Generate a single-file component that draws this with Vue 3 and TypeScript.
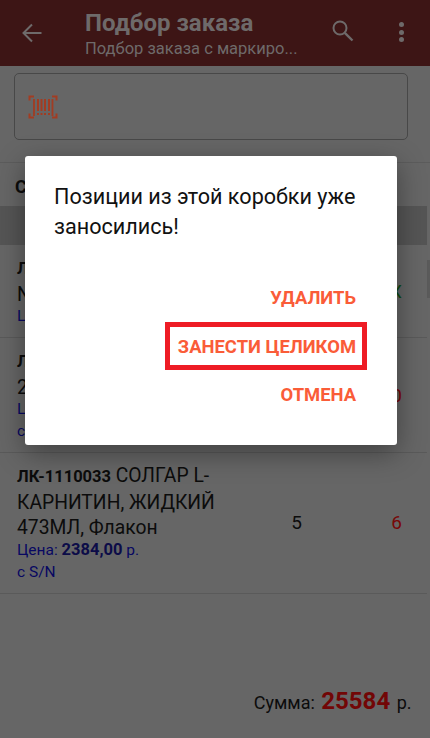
<template>
  <div class="screen">
    <header class="toolbar">
      <svg class="back" width="20" height="20" viewBox="0 0 20 20" fill="none" stroke="#6e6a6a" stroke-width="2"><path d="M19.500 10H2M10 1.500 1.500 10l8.500 8.500" /></svg>
      <div class="titles">
        <div class="title">Подбор заказа</div>
        <div class="subtitle">Подбор заказа с маркиро...</div>
      </div>
      <svg class="search" width="22" height="22" viewBox="0 0 22 22" fill="none" stroke="#6e6a6a"><circle cx="8" cy="8" r="6.500" stroke-width="2" /><path d="m12.800 12.800 7.700 7.700" stroke-width="2.400" /></svg>
      <div class="dots"><i></i><i></i><i></i></div>
    </header>

    <div class="scan">
      <svg width="30" height="24" viewBox="0 0 30 24" fill="none" stroke="#a23c22">
        <path d="M6 1.500H1.500V5.500M24 1.500h4.500v4M6 22.500H1.500v-4M24 22.500h4.500v-4" stroke-width="2" />
        <path d="M6 4v17M24.500 4v17" stroke-width="1.800" />
        <path d="M10 4v12M10 18v2M13.500 4v12M13.500 18v2M17 4v12M17 18v2M21 4v12M21 18v2" stroke-width="2" />
      </svg>
    </div>

    <div class="section">Состав</div>
    <div class="band"></div>

    <div v-for="row in rows" :key="row.code" class="row">
      <div class="info">
        <div class="name"><b>{{ row.code }}</b> {{ row.name }}</div>
        <div class="price">Цена: <b>{{ row.price }}</b> р.</div>
        <div v-if="row.serial" class="serial">с S/N</div>
      </div>
      <div class="qty">{{ row.qty }}</div>
      <div class="fact" :class="row.tone">{{ row.fact }}</div>
    </div>

    <div class="total">Сумма: <b>25584</b> р.</div>

    <div class="thumb"></div>

    <div class="dialog">
      <p class="message">Позиции из этой коробки уже заносились!</p>
      <div class="actions">
        <button>УДАЛИТЬ</button>
        <button class="marked">ЗАНЕСТИ ЦЕЛИКОМ</button>
        <button>ОТМЕНА</button>
      </div>
    </div>
  </div>
</template>

<script setup lang="ts">
interface Row {
  code: string
  name: string
  price: string
  serial: boolean
  qty: number
  fact: string
  tone: string
}

const rows: Row[] = [
  { code: 'ЛК-1110031', name: 'СОЛГАР NATURAL, Флакон', price: '2384,00', serial: false, qty: 5, fact: 'X', tone: 'green' },
  { code: 'ЛК-1110032', name: 'СОЛГАР 2500МЕ, Флакон', price: '2384,00', serial: true, qty: 5, fact: '0', tone: 'red' },
  { code: 'ЛК-1110033', name: 'СОЛГАР L-КАРНИТИН, ЖИДКИЙ 473МЛ, Флакон', price: '2384,00', serial: true, qty: 5, fact: '6', tone: 'red' },
]
</script>

<style>
html,
body {
  margin: 0;
  background: #666;
}
</style>

<style scoped>
.screen {
  position: relative;
  width: 430px;
  height: 738px;
  overflow: hidden;
  display: flex;
  flex-direction: column;
  background: #666;
  color: #0c0c0c;
  font-family: Roboto, sans-serif;
}

.toolbar {
  height: 66px;
  flex: none;
  display: flex;
  align-items: center;
  background: #3d1515;
  color: #6e6a6a;
}

.back {
  margin-left: 22px;
  flex: none;
}

.titles {
  margin-left: 43px;
  width: 248px;
  white-space: nowrap;
}

.title {
  font-size: 24px;
  font-weight: 700;
  line-height: 28px;
  margin-top: 3px;
}

.subtitle {
  font-size: 16.500px;
  line-height: 24px;
}

.search {
  margin-left: -1px;
  margin-top: -4px;
  flex: none;
}

.dots {
  margin-left: 45px;
  margin-top: -2px;
  display: flex;
  flex-direction: column;
  gap: 2.500px;
}

.dots i {
  width: 5px;
  height: 5px;
  border-radius: 50%;
  background: #6e6a6a;
}

.scan {
  height: 65px;
  margin: 7px 22px 0 14px;
  flex: none;
  display: flex;
  align-items: center;
  padding-left: 13px;
  border: 1px solid #484848;
  border-radius: 5px;
}

.section {
  margin-top: 22px;
  padding: 12px 15px 0;
  height: 31px;
  flex: none;
  border-top: 1px solid #5c5c5c;
  font-size: 18px;
  font-weight: 700;
  line-height: 24px;
  width: 412px;
}

.band {
  height: 39px;
  width: 427px;
  flex: none;
  background: #555;
}

.row {
  width: 427px;
  flex: none;
  box-sizing: border-box;
  display: flex;
  align-items: center;
  padding: 10px 0 10px 17px;
  border-bottom: 1px solid #5a5a5a;
}

.info {
  width: 225px;
  flex: none;
}

.name {
  font-size: 19.300px;
  line-height: 25.500px;
}

.name b {
  font-size: 16.500px;
}

.price,
.serial {
  color: #080862;
  font-size: 15.500px;
  line-height: 22px;
}

.price {
  margin-top: -2px;
}

.price b {
  color: #0c0c48;
  font-size: 16.500px;
}

.qty {
  width: 60px;
  text-align: right;
  font-size: 19px;
  padding-right: 15px;
  box-sizing: border-box;
  margin-left: 15px;
}

.fact {
  margin-left: auto;
  margin-right: 25px;
  font-size: 19px;
}

.red {
  color: #780808;
}

.green {
  color: #0c4a10;
}

.total {
  margin-top: auto;
  margin-bottom: 19px;
  padding-right: 18.500px;
  text-align: right;
  font-size: 18px;
  line-height: 32px;
}

.total b {
  color: #720606;
  font-size: 24px;
  margin: 0 2px;
}

.thumb {
  position: absolute;
  right: 0;
  top: 260px;
  width: 3px;
  height: 38px;
  background: #5a5a5a;
}

.dialog {
  position: absolute;
  left: 25px;
  top: 156px;
  width: 372px;
  height: 289px;
  box-sizing: border-box;
  padding: 26px 29px 0;
  background: #fff;
  border-radius: 3px;
  box-shadow: 0 8px 28px rgba(0, 0, 0, 0.38);
}

.message {
  margin: 0;
  font-size: 21.600px;
  line-height: 29.500px;
  color: #111;
}

.actions {
  margin-top: 32px;
  margin-right: 12px;
  display: flex;
  flex-direction: column;
  align-items: flex-end;
}

.actions button {
  height: 49px;
  padding: 0;
  border: 0;
  background: none;
  color: #fa5c38;
  font-family: Roboto, sans-serif;
  font-size: 18.400px;
  font-weight: 700;
  cursor: pointer;
}

.actions .marked {
  box-sizing: border-box;
  height: 48px;
  margin-right: -11px;
  padding: 0 6px 0 8px;
  border: 5px solid #ee1c25;
}
</style>
